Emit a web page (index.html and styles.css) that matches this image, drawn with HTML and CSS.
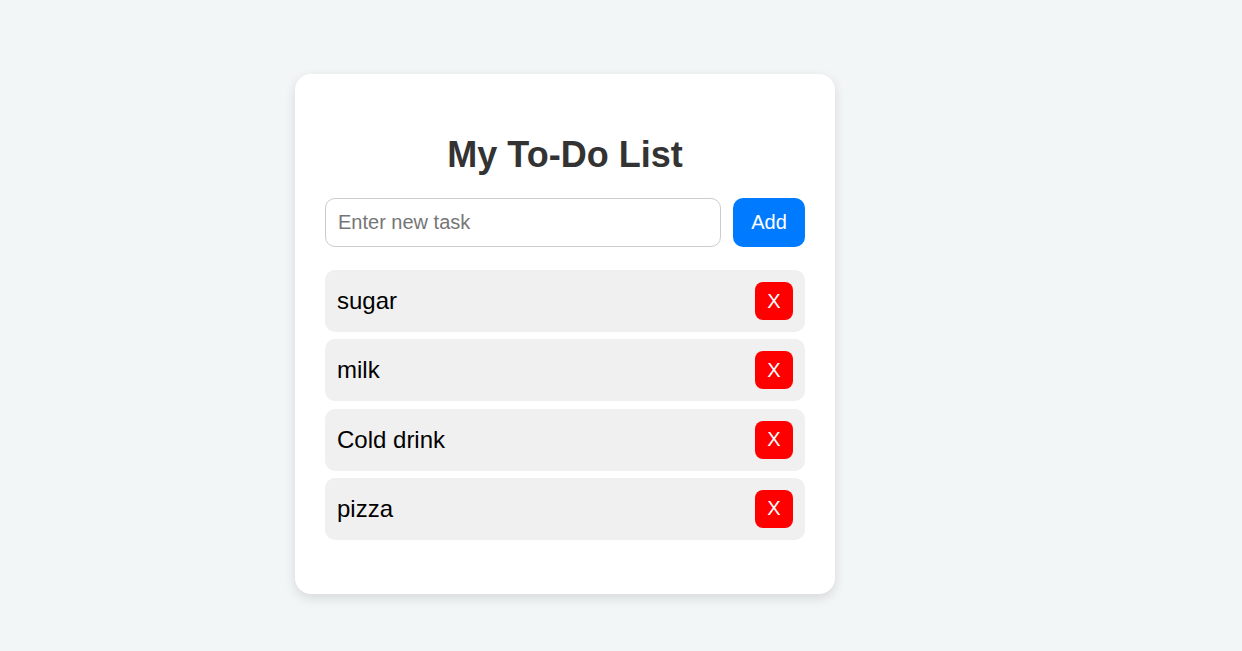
FILE: index.html
```html
<!DOCTYPE html>
<html lang="en">
<head>
<meta charset="utf-8">
<title>My To-Do List</title>
<link rel="stylesheet" href="styles.css">
</head>
<body>
<div class="card">
  <h2 class="title">My To-Do List</h2>
  <div class="entry">
    <input class="task-input" type="text" placeholder="Enter new task">
    <button class="add-btn">Add</button>
  </div>
  <ul class="tasks">
    <li class="task"><span class="task-text">sugar</span><button class="del-btn">X</button></li>
    <li class="task"><span class="task-text">milk</span><button class="del-btn">X</button></li>
    <li class="task"><span class="task-text">Cold drink</span><button class="del-btn">X</button></li>
    <li class="task"><span class="task-text">pizza</span><button class="del-btn">X</button></li>
  </ul>
</div>
</body>
</html>
```
FILE: styles.css
```css
* { box-sizing: border-box; }
html, body { margin: 0; }
body {
  background: #f3f6f7;
  font-family: "Liberation Sans", Arial, sans-serif;
  padding: 74px 0 0 295px;
  min-height: 651px;
}
.card {
  width: 540px;
  height: 520px;
  background: #fff;
  border-radius: 16px;
  padding: 30px;
  box-shadow: 0 4px 12px rgba(0, 0, 0, 0.12);
}
.title {
  margin: 30px 0 23px;
  text-align: center;
  font-size: 36px;
  font-weight: bold;
  color: #333;
  line-height: 41px;
}
.entry {
  display: flex;
  gap: 12px;
  height: 49px;
}
.task-input {
  flex: 1;
  height: 49px;
  border: 1px solid #ccc;
  border-radius: 10px;
  padding: 0 12px;
  font-family: inherit;
  font-size: 20px;
  color: #333;
  outline: none;
}
.task-input::placeholder { color: #767676; }
.add-btn {
  width: 72px;
  height: 49px;
  border: none;
  border-radius: 10px;
  background: #007bff;
  color: #fff;
  font-family: inherit;
  font-size: 20px;
  padding: 0;
}
.tasks {
  list-style: none;
  margin: 23px 0 0;
  padding: 0;
  display: flex;
  flex-direction: column;
  gap: 7.33px;
}
.task {
  display: flex;
  align-items: center;
  justify-content: space-between;
  height: 62px;
  background: #f0f0f0;
  border-radius: 10px;
  padding: 0 12px;
}
.task-text {
  font-size: 24px;
  color: #000;
}
.del-btn {
  width: 38px;
  height: 38px;
  border: none;
  border-radius: 8px;
  background: #ff0000;
  color: #fff;
  font-family: inherit;
  font-size: 20px;
  padding: 0;
}
```
